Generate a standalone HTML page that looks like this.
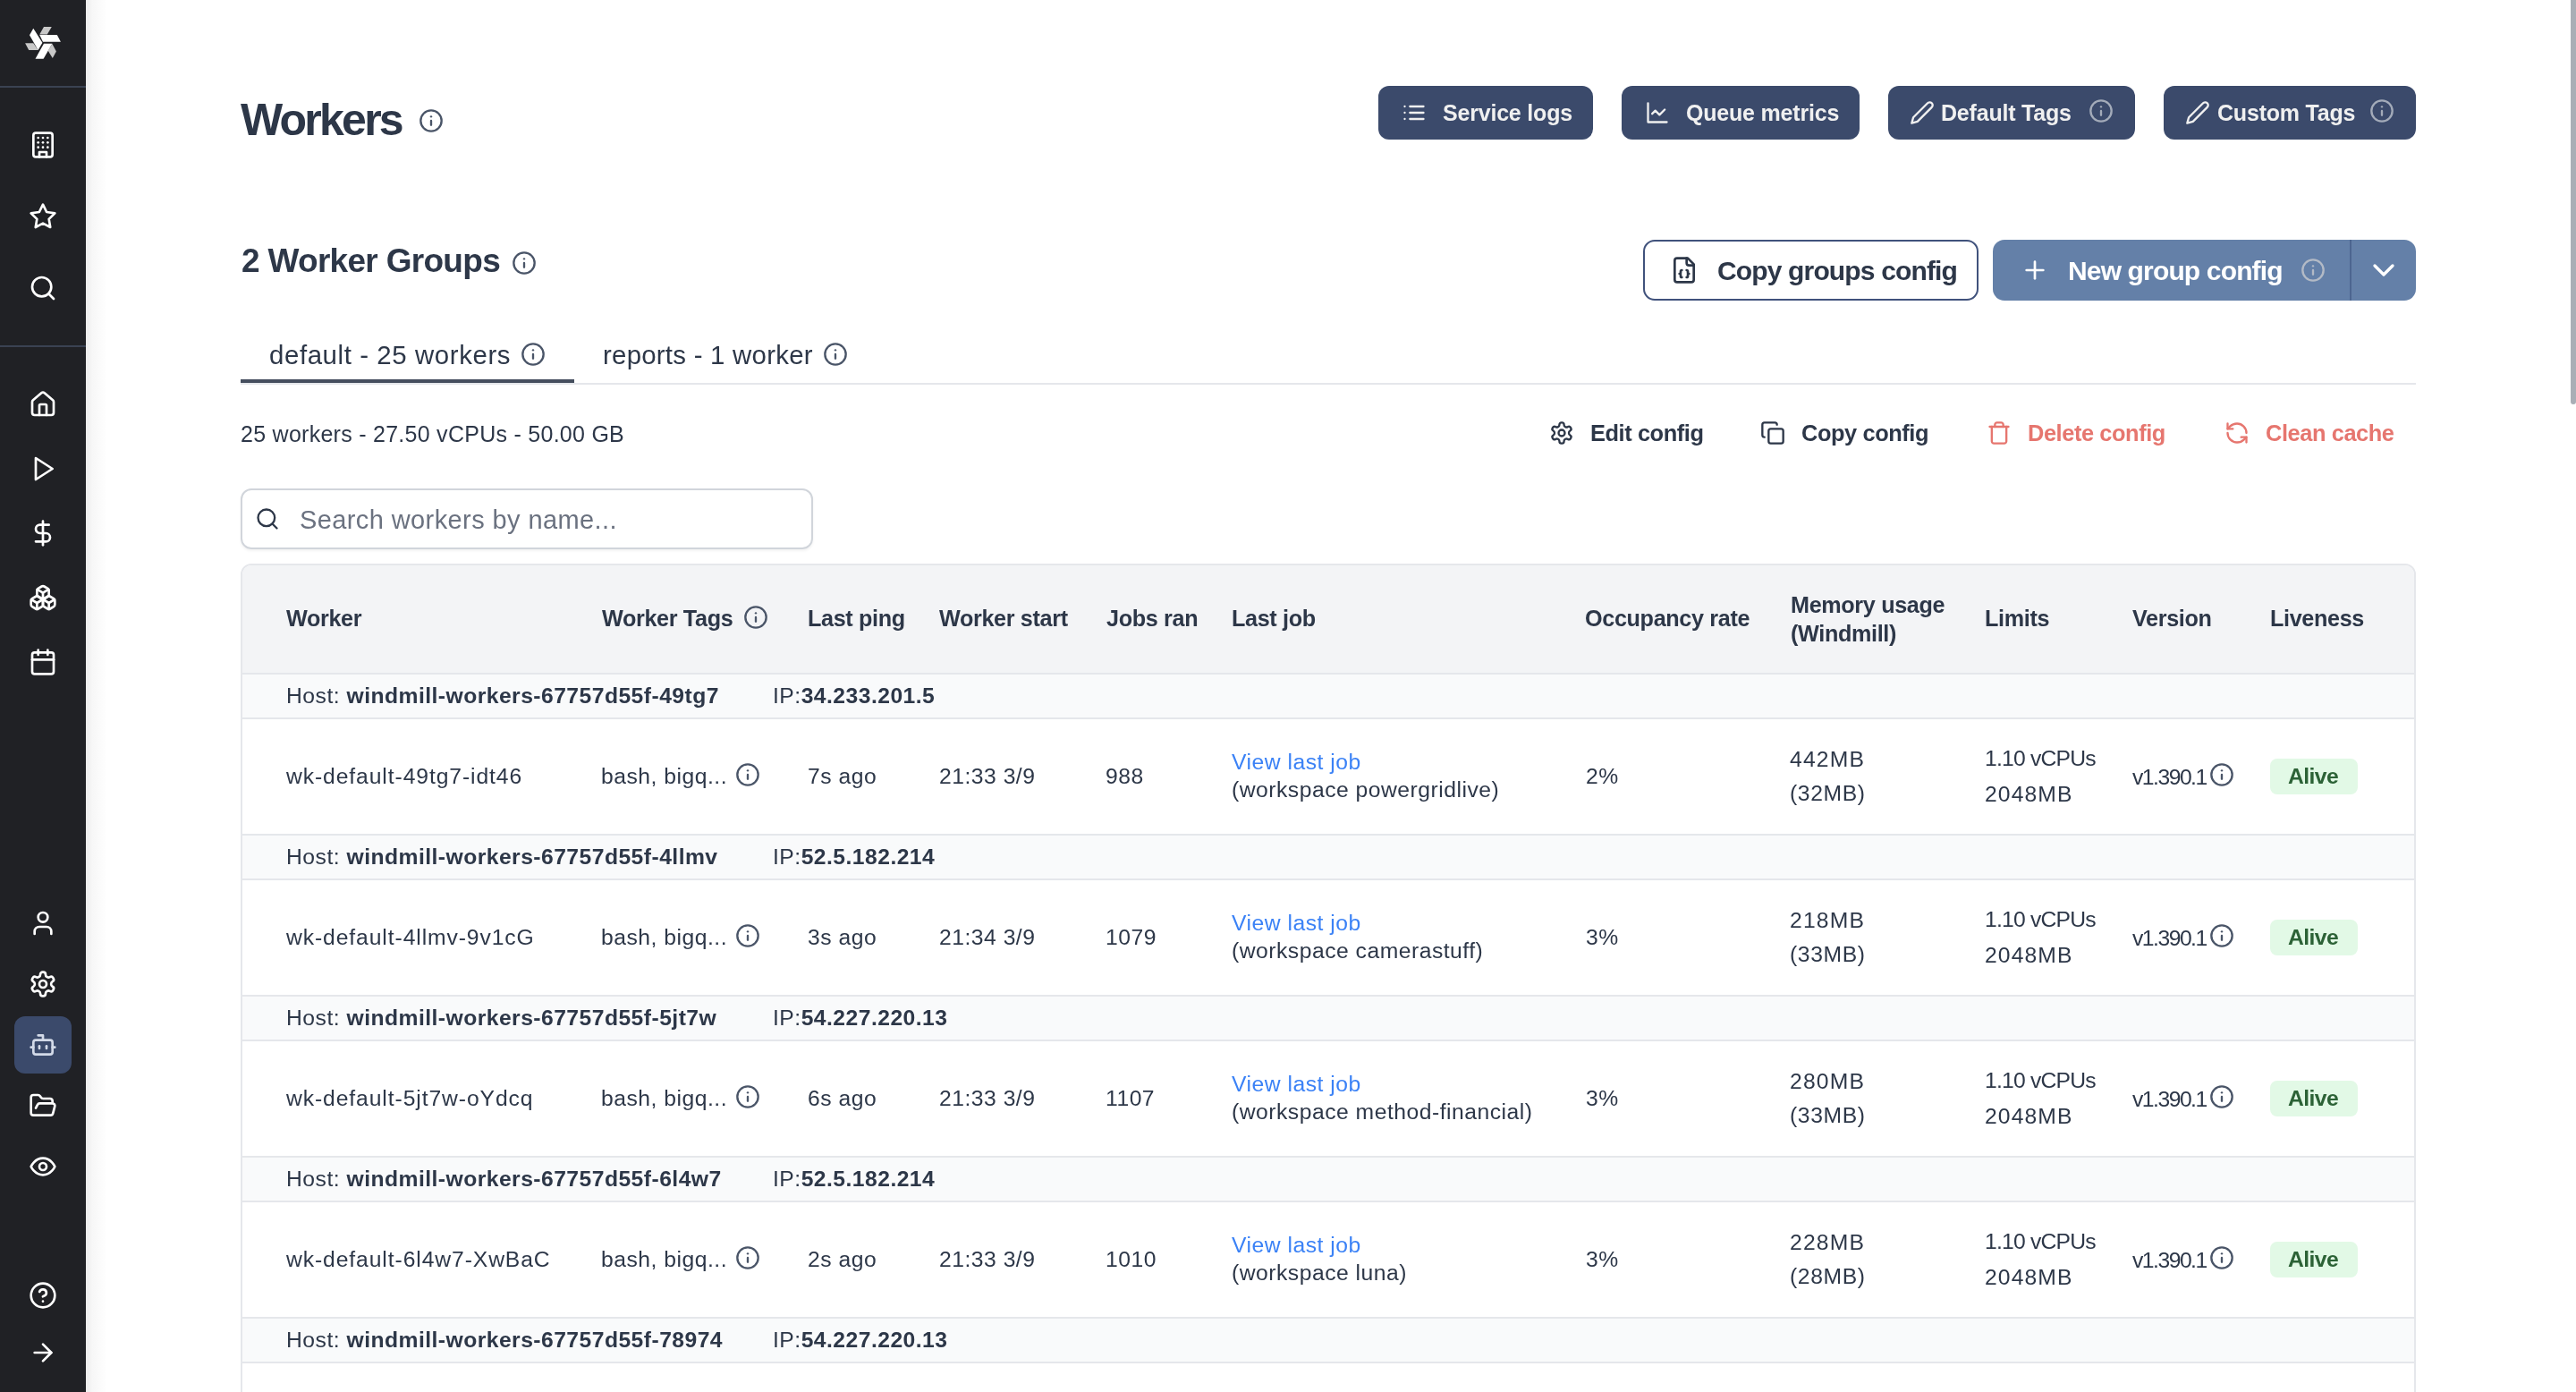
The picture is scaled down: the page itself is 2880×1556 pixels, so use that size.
<!DOCTYPE html>
<html><head><meta charset="utf-8"><title>Workers</title>
<style>
*{margin:0;padding:0;box-sizing:border-box}
html,body{width:2880px;height:1556px;overflow:hidden;background:#fff}
@media (max-width:1600px){html{zoom:0.5}}
body{position:relative;font-family:"Liberation Sans", sans-serif;color:#2d3748}
.t{position:absolute;white-space:nowrap;line-height:40px;height:40px;will-change:transform}
.b{font-weight:700}
.ic{position:absolute;overflow:visible}
#sb{position:absolute;left:0;top:0;width:96px;height:1556px;background:#202125;z-index:2}
#sb .div{position:absolute;left:0;width:96px;height:2px;background:#3a4252}
#act{position:absolute;left:16px;top:1136px;width:64px;height:64px;border-radius:12px;background:#3b4a6b}
#sbshadow{position:absolute;left:96px;top:0;width:24px;height:1556px;background:linear-gradient(to right,#ececec,#f7f7f7 30%,#fff);z-index:1}
.title{font-size:50px;letter-spacing:-2.75px}
.btn{position:absolute;top:96px;height:60px;border-radius:12px;background:#3b4a6b}
.btxt{font-size:25px;color:#f0f0f0;letter-spacing:-0.2px}
.h2{font-size:37px;letter-spacing:-0.7px}
#cgc{position:absolute;left:1837px;top:268px;width:375px;height:68px;border:2px solid #40527c;border-radius:13px;background:#fff}
#ngc{position:absolute;left:2228px;top:268px;width:473px;height:68px;border-radius:13px;background:#6480a8}
#ngcdiv{position:absolute;left:2627px;top:268px;width:2px;height:68px;background:#4d6590}
.btxt2{font-size:30px;letter-spacing:-0.85px}
.w{color:#fff}
#tabline{position:absolute;left:269px;top:428px;width:2432px;height:2px;background:#e5e7eb}
#tabact{position:absolute;left:269px;top:424px;width:373px;height:4px;background:#454e5e}
.tab{font-size:29.4px;letter-spacing:0.6px}
.stat{font-size:25px;letter-spacing:0.27px}
.act{font-size:25.4px;letter-spacing:-0.42px}
.red{color:#e6766f}
#search{position:absolute;left:269px;top:546px;width:640px;height:68px;border:2px solid #d1d5db;border-radius:12px;box-shadow:0 2px 3px rgba(0,0,0,0.05)}
.ph{font-size:29px;color:#6b7280;letter-spacing:0.4px}
#table{position:absolute;left:269px;top:630px;width:2432px;height:1000px;border:2px solid #e5e7eb;border-radius:12px;overflow:hidden;background:#fff}
#thead{position:absolute;left:0;top:0;right:0;height:122px;background:#f3f4f6;border-bottom:2px solid #e5e7eb}
.th{font-size:25.2px;letter-spacing:-0.35px}
.hrow{position:absolute;left:271px;width:2428px;height:50px;background:#f9fafb;border-bottom:2px solid #e5e7eb}
.wrow{position:absolute;left:271px;width:2428px;height:130px;background:#fff;border-bottom:2px solid #e5e7eb}
.td{font-size:24.7px;letter-spacing:0.5px}
.td b{letter-spacing:0.45px}
.wk{letter-spacing:0.9px}
.link{color:#3b82f6}
.badge{position:absolute;left:2538px;width:98px;height:40px;border-radius:8px;background:#e2f9e6}
.alive{color:#2c6236;letter-spacing:-0.6px}
#scroll{position:absolute;left:2874px;top:-3px;width:6px;height:455px;border-radius:3px;background:#a9aeb6}
</style></head>
<body>
<div id="sb">
<div class="div" style="top:96px"></div><div class="div" style="top:386px"></div>
<svg class="ic" style="left:24px;top:26px;width:48px;height:44px" viewBox="24 26 48 44">
<polygon fill="#c8c8c8" points="49.0,30.1 57.8,30.1 52.8,38.6 44.2,38.6"/>
<polygon fill="#c8c8c8" points="28.1,48.3 37.3,48.3 42.6,55.9 32.2,55.9"/>
<polygon fill="#c8c8c8" points="58.4,49.1 62.9,57.6 58.8,64.9 53.7,56.8"/>
<polygon fill="#fff" points="37.3,31.8 47.4,47.8 42.6,55.9 33.0,39.3"/>
<polygon fill="#fff" points="44.2,39.0 63.8,39.0 67.9,46.7 48.0,46.7"/>
<polygon fill="#fff" points="49.0,48.7 58.4,48.7 48.6,65.7 39.5,65.7"/>
</svg>
<div id="act"></div>
<svg class="ic" style="left:32px;top:145.7px;width:32px;height:32px" viewBox="0 0 24 24" fill="none" stroke="#ffffff" stroke-width="2" stroke-linecap="round" stroke-linejoin="round"><rect width="16" height="20" x="4" y="2" rx="2" ry="2"/><path d="M9 22v-4h6v4"/><path d="M8 6h.01"/><path d="M16 6h.01"/><path d="M12 6h.01"/><path d="M12 10h.01"/><path d="M12 14h.01"/><path d="M16 10h.01"/><path d="M16 14h.01"/><path d="M8 10h.01"/><path d="M8 14h.01"/></svg>
<svg class="ic" style="left:32px;top:225.7px;width:32px;height:32px" viewBox="0 0 24 24" fill="none" stroke="#ffffff" stroke-width="2" stroke-linecap="round" stroke-linejoin="round"><polygon points="12 2 15.09 8.26 22 9.27 17 14.14 18.18 21.02 12 17.77 5.82 21.02 7 14.14 2 9.27 8.91 8.26 12 2"/></svg>
<svg class="ic" style="left:32px;top:305.8px;width:32px;height:32px" viewBox="0 0 24 24" fill="none" stroke="#ffffff" stroke-width="2" stroke-linecap="round" stroke-linejoin="round"><circle cx="11" cy="11" r="8"/><path d="m21 21-4.3-4.3"/></svg>
<svg class="ic" style="left:32px;top:435.7px;width:32px;height:32px" viewBox="0 0 24 24" fill="none" stroke="#ffffff" stroke-width="2" stroke-linecap="round" stroke-linejoin="round"><path d="M15 21v-8a1 1 0 0 0-1-1h-4a1 1 0 0 0-1 1v8"/><path d="M3 10a2 2 0 0 1 .709-1.528l7-5.999a2 2 0 0 1 2.582 0l7 5.999A2 2 0 0 1 21 10v9a2 2 0 0 1-2 2H5a2 2 0 0 1-2-2z"/></svg>
<svg class="ic" style="left:32px;top:508px;width:32px;height:32px" viewBox="0 0 24 24" fill="none" stroke="#ffffff" stroke-width="2" stroke-linecap="round" stroke-linejoin="round"><polygon points="6 3 20 12 6 21 6 3"/></svg>
<svg class="ic" style="left:32px;top:580px;width:32px;height:32px" viewBox="0 0 24 24" fill="none" stroke="#ffffff" stroke-width="2" stroke-linecap="round" stroke-linejoin="round"><line x1="12" x2="12" y1="2" y2="22"/><path d="M17 5H9.5a3.5 3.5 0 0 0 0 7h5a3.5 3.5 0 0 1 0 7H6"/></svg>
<svg class="ic" style="left:32px;top:652px;width:32px;height:32px" viewBox="0 0 24 24" fill="none" stroke="#ffffff" stroke-width="2" stroke-linecap="round" stroke-linejoin="round"><path d="M2.97 12.92A2 2 0 0 0 2 14.63v3.24a2 2 0 0 0 .97 1.71l3 1.8a2 2 0 0 0 2.06 0L12 19v-5.5l-5-3-4.03 2.42Z"/><path d="m7 16.5-4.74-2.85"/><path d="m7 16.5 5-3"/><path d="M7 16.5v5.17"/><path d="M12 13.5V19l3.97 2.38a2 2 0 0 0 2.06 0l3-1.8a2 2 0 0 0 .97-1.71v-3.24a2 2 0 0 0-.97-1.71L17 10.5l-5 3Z"/><path d="m17 16.5-5-3"/><path d="m17 16.5 4.74-2.85"/><path d="M17 16.5v5.17"/><path d="M7.97 4.42A2 2 0 0 0 7 6.13v4.37l5 3 5-3V6.13a2 2 0 0 0-.97-1.71l-3-1.8a2 2 0 0 0-2.060 0l-3 1.8Z"/><path d="M12 8 7.26 5.15"/><path d="m12 8 4.74-2.85"/><path d="M12 13.5V8"/></svg>
<svg class="ic" style="left:32px;top:723.7px;width:32px;height:32px" viewBox="0 0 24 24" fill="none" stroke="#ffffff" stroke-width="2" stroke-linecap="round" stroke-linejoin="round"><rect width="18" height="18" x="3" y="4" rx="2" ry="2"/><line x1="16" x2="16" y1="2" y2="6"/><line x1="8" x2="8" y1="2" y2="6"/><line x1="3" x2="21" y1="10" y2="10"/></svg>
<svg class="ic" style="left:32px;top:1015.7px;width:32px;height:32px" viewBox="0 0 24 24" fill="none" stroke="#ffffff" stroke-width="2" stroke-linecap="round" stroke-linejoin="round"><path d="M19 21v-2a4 4 0 0 0-4-4H9a4 4 0 0 0-4 4v2"/><circle cx="12" cy="7" r="4"/></svg>
<svg class="ic" style="left:32px;top:1083.7px;width:32px;height:32px" viewBox="0 0 24 24" fill="none" stroke="#ffffff" stroke-width="2" stroke-linecap="round" stroke-linejoin="round"><path d="M12.22 2h-.44a2 2 0 0 0-2 2v.18a2 2 0 0 1-1 1.73l-.43.25a2 2 0 0 1-2 0l-.15-.08a2 2 0 0 0-2.73.73l-.22.38a2 2 0 0 0 .73 2.73l.15.1a2 2 0 0 1 1 1.72v.51a2 2 0 0 1-1 1.74l-.15.09a2 2 0 0 0-.73 2.73l.22.38a2 2 0 0 0 2.73.73l.15-.08a2 2 0 0 1 2 0l.43.25a2 2 0 0 1 1 1.73V20a2 2 0 0 0 2 2h.44a2 2 0 0 0 2-2v-.18a2 2 0 0 1 1-1.73l.43-.25a2 2 0 0 1 2 0l.15.08a2 2 0 0 0 2.73-.73l.22-.39a2 2 0 0 0-.73-2.73l-.15-.08a2 2 0 0 1-1-1.74v-.5a2 2 0 0 1 1-1.74l.15-.09a2 2 0 0 0 .73-2.730l-.22-.38a2 2 0 0 0-2.73-.73l-.15.08a2 2 0 0 1-2 0l-.43-.25a2 2 0 0 1-1-1.73V4a2 2 0 0 0-2-2z"/><circle cx="12" cy="12" r="3"/></svg>
<svg class="ic" style="left:32px;top:1152px;width:32px;height:32px" viewBox="0 0 24 24" fill="none" stroke="#d3dae8" stroke-width="2" stroke-linecap="round" stroke-linejoin="round"><path d="M12 8V4H8"/><rect width="16" height="12" x="4" y="8" rx="2"/><path d="M2 14h2"/><path d="M20 14h2"/><path d="M15 13v2"/><path d="M9 13v2"/></svg>
<svg class="ic" style="left:32px;top:1220px;width:32px;height:32px" viewBox="0 0 24 24" fill="none" stroke="#ffffff" stroke-width="2" stroke-linecap="round" stroke-linejoin="round"><path d="m6 14 1.5-2.9A2 2 0 0 1 9.24 10H20a2 2 0 0 1 1.94 2.5l-1.54 6a2 2 0 0 1-1.95 1.5H4a2 2 0 0 1-2-2V5a2 2 0 0 1 2-2h3.9a2 2 0 0 1 1.69.9l.81 1.2a2 2 0 0 0 1.67.9H18a2 2 0 0 1 2 2v2"/></svg>
<svg class="ic" style="left:32px;top:1287.7px;width:32px;height:32px" viewBox="0 0 24 24" fill="none" stroke="#ffffff" stroke-width="2" stroke-linecap="round" stroke-linejoin="round"><path d="M2 12s3-7 10-7 10 7 10 7-3 7-10 7-10-7-10-7Z"/><circle cx="12" cy="12" r="3"/></svg>
<svg class="ic" style="left:32px;top:1431.7px;width:32px;height:32px" viewBox="0 0 24 24" fill="none" stroke="#ffffff" stroke-width="2" stroke-linecap="round" stroke-linejoin="round"><circle cx="12" cy="12" r="10"/><path d="M9.09 9a3 3 0 0 1 5.83 1c0 2-3 3-3 3"/><path d="M12 17h.01"/></svg>
<svg class="ic" style="left:32px;top:1495.6px;width:32px;height:32px" viewBox="0 0 24 24" fill="none" stroke="#ffffff" stroke-width="2" stroke-linecap="round" stroke-linejoin="round"><path d="M5 12h14"/><path d="m12 5 7 7-7 7"/></svg>
</div>
<div id="sbshadow"></div>
<div class="t b title" style="left:269px;top:114.3px">Workers</div>
<svg class="ic" style="left:467.8px;top:120.8px;width:28px;height:28px" viewBox="0 0 24 24" fill="none" stroke="#4a5568" stroke-width="2" stroke-linecap="round" stroke-linejoin="round"><circle cx="12" cy="12" r="10"/><path d="M12 16v-4"/><path d="M12 8h.01"/></svg>
<div class="btn" style="left:1541px;width:240px"></div>
<svg class="ic" style="left:1566.5px;top:111.5px;width:28px;height:28px" viewBox="0 0 24 24" fill="none" stroke="#f0f0f0" stroke-width="2" stroke-linecap="round" stroke-linejoin="round"><line x1="8" x2="21" y1="6" y2="6"/><line x1="8" x2="21" y1="12" y2="12"/><line x1="8" x2="21" y1="18" y2="18"/><line x1="3" x2="3.01" y1="6" y2="6"/><line x1="3" x2="3.01" y1="12" y2="12"/><line x1="3" x2="3.01" y1="18" y2="18"/></svg>
<div class="t b btxt" style="left:1613px;top:105.5px">Service logs</div>
<div class="btn" style="left:1813px;width:266px"></div>
<svg class="ic" style="left:1838.7px;top:111.5px;width:28px;height:28px" viewBox="0 0 24 24" fill="none" stroke="#f0f0f0" stroke-width="2" stroke-linecap="round" stroke-linejoin="round"><path d="M3 3v18h18"/><path d="m19 9-5 5-4-4-3 3"/></svg>
<div class="t b btxt" style="left:1884.5px;top:105.5px">Queue metrics</div>
<div class="btn" style="left:2111px;width:276px"></div>
<svg class="ic" style="left:2134.5px;top:111.5px;width:28px;height:28px" viewBox="0 0 24 24" fill="none" stroke="#f0f0f0" stroke-width="2" stroke-linecap="round" stroke-linejoin="round"><path d="M17 3a2.85 2.83 0 1 1 4 4L7.5 20.5 2 22l1.5-5.5Z"/></svg>
<div class="t b btxt" style="left:2170px;top:105.5px">Default Tags</div>
<svg class="ic" style="left:2334.8px;top:109.8px;width:28px;height:28px" viewBox="0 0 24 24" fill="none" stroke="#a3abb9" stroke-width="2" stroke-linecap="round" stroke-linejoin="round"><circle cx="12" cy="12" r="10"/><path d="M12 16v-4"/><path d="M12 8h.01"/></svg>
<div class="btn" style="left:2419px;width:282px"></div>
<svg class="ic" style="left:2442.5px;top:111.5px;width:28px;height:28px" viewBox="0 0 24 24" fill="none" stroke="#f0f0f0" stroke-width="2" stroke-linecap="round" stroke-linejoin="round"><path d="M17 3a2.85 2.83 0 1 1 4 4L7.5 20.5 2 22l1.5-5.5Z"/></svg>
<div class="t b btxt" style="left:2478.5px;top:105.5px">Custom Tags</div>
<svg class="ic" style="left:2649.3px;top:109.8px;width:28px;height:28px" viewBox="0 0 24 24" fill="none" stroke="#a3abb9" stroke-width="2" stroke-linecap="round" stroke-linejoin="round"><circle cx="12" cy="12" r="10"/><path d="M12 16v-4"/><path d="M12 8h.01"/></svg>
<div class="t b h2" style="left:269.5px;top:271.5px">2 Worker Groups</div>
<svg class="ic" style="left:571.8px;top:279.8px;width:28px;height:28px" viewBox="0 0 24 24" fill="none" stroke="#4a5568" stroke-width="2" stroke-linecap="round" stroke-linejoin="round"><circle cx="12" cy="12" r="10"/><path d="M12 16v-4"/><path d="M12 8h.01"/></svg>
<div id="cgc"></div>
<svg class="ic" style="left:1867px;top:285.7px;width:32px;height:32px" viewBox="0 0 24 24" fill="none" stroke="#2d3748" stroke-width="2" stroke-linecap="round" stroke-linejoin="round"><path d="M15 2H6a2 2 0 0 0-2 2v16a2 2 0 0 0 2 2h12a2 2 0 0 0 2-2V7Z"/><path d="M14 2v4a2 2 0 0 0 2 2h4"/><path d="M10 12a1 1 0 0 0-1 1v1a1 1 0 0 1-1 1 1 1 0 0 1 1 1v1a1 1 0 0 0 1 1"/><path d="M14 18a1 1 0 0 0 1-1v-1a1 1 0 0 1 1-1 1 1 0 0 1-1-1v-1a1 1 0 0 0-1-1"/></svg>
<div class="t b btxt2" style="left:1919.5px;top:283.2px">Copy groups config</div>
<div id="ngc"></div><div id="ngcdiv"></div>
<svg class="ic" style="left:2258.7px;top:285.7px;width:32px;height:32px" viewBox="0 0 24 24" fill="none" stroke="#ffffff" stroke-width="2" stroke-linecap="round" stroke-linejoin="round"><path d="M5 12h14"/><path d="M12 5v14"/></svg>
<div class="t b btxt2 w" style="left:2311.5px;top:283.0px">New group config</div>
<svg class="ic" style="left:2571.8px;top:287.8px;width:28px;height:28px" viewBox="0 0 24 24" fill="none" stroke="#b3bac6" stroke-width="2" stroke-linecap="round" stroke-linejoin="round"><circle cx="12" cy="12" r="10"/><path d="M12 16v-4"/><path d="M12 8h.01"/></svg>
<svg class="ic" style="left:2644.7px;top:282.2px;width:40px;height:40px" viewBox="0 0 24 24" fill="none" stroke="#ffffff" stroke-width="2" stroke-linecap="round" stroke-linejoin="round"><path d="m6 9 6 6 6-6"/></svg>
<div id="tabline"></div><div id="tabact"></div>
<div class="t tab" style="left:301px;top:377.0px">default - 25 workers</div>
<svg class="ic" style="left:581.8px;top:381.8px;width:28px;height:28px" viewBox="0 0 24 24" fill="none" stroke="#4a5568" stroke-width="2" stroke-linecap="round" stroke-linejoin="round"><circle cx="12" cy="12" r="10"/><path d="M12 16v-4"/><path d="M12 8h.01"/></svg>
<div class="t tab" style="left:673.5px;top:377.0px;letter-spacing:0.25px">reports - 1 worker</div>
<svg class="ic" style="left:920.4px;top:381.8px;width:28px;height:28px" viewBox="0 0 24 24" fill="none" stroke="#4a5568" stroke-width="2" stroke-linecap="round" stroke-linejoin="round"><circle cx="12" cy="12" r="10"/><path d="M12 16v-4"/><path d="M12 8h.01"/></svg>
<div class="t stat" style="left:269px;top:464.6px">25 workers - 27.50 vCPUs - 50.00 GB</div>
<svg class="ic" style="left:1731.8px;top:469.8px;width:28px;height:28px" viewBox="0 0 24 24" fill="none" stroke="#2d3748" stroke-width="2" stroke-linecap="round" stroke-linejoin="round"><path d="M12.22 2h-.44a2 2 0 0 0-2 2v.18a2 2 0 0 1-1 1.73l-.43.25a2 2 0 0 1-2 0l-.15-.08a2 2 0 0 0-2.73.73l-.22.38a2 2 0 0 0 .73 2.73l.15.1a2 2 0 0 1 1 1.72v.51a2 2 0 0 1-1 1.74l-.15.09a2 2 0 0 0-.73 2.73l.22.38a2 2 0 0 0 2.73.73l.15-.08a2 2 0 0 1 2 0l.43.25a2 2 0 0 1 1 1.73V20a2 2 0 0 0 2 2h.44a2 2 0 0 0 2-2v-.18a2 2 0 0 1 1-1.73l.43-.25a2 2 0 0 1 2 0l.15.08a2 2 0 0 0 2.73-.73l.22-.39a2 2 0 0 0-.73-2.73l-.15-.08a2 2 0 0 1-1-1.74v-.5a2 2 0 0 1 1-1.74l.15-.09a2 2 0 0 0 .73-2.730l-.22-.38a2 2 0 0 0-2.73-.73l-.15.08a2 2 0 0 1-2 0l-.43-.25a2 2 0 0 1-1-1.73V4a2 2 0 0 0-2-2z"/><circle cx="12" cy="12" r="3"/></svg>
<div class="t b act" style="left:1777.5px;top:464.3px">Edit config</div>
<svg class="ic" style="left:1967.8px;top:469.8px;width:28px;height:28px" viewBox="0 0 24 24" fill="none" stroke="#2d3748" stroke-width="2" stroke-linecap="round" stroke-linejoin="round"><rect width="14" height="14" x="8" y="8" rx="2" ry="2"/><path d="M4 16c-1.1 0-2-.9-2-2V4c0-1.1.9-2 2-2h10c1.1 0 2 .9 2 2"/></svg>
<div class="t b act" style="left:2014px;top:464.3px">Copy config</div>
<svg class="ic" style="left:2221.2px;top:469.8px;width:28px;height:28px" viewBox="0 0 24 24" fill="none" stroke="#e6766f" stroke-width="2" stroke-linecap="round" stroke-linejoin="round"><path d="M3 6h18"/><path d="M19 6v14c0 1-1 2-2 2H7c-1 0-2-1-2-2V6"/><path d="M8 6V4c0-1 1-2 2-2h4c1 0 2 1 2 2v2"/></svg>
<div class="t b act red" style="left:2266.5px;top:464.3px">Delete config</div>
<svg class="ic" style="left:2487px;top:469.8px;width:28px;height:28px" viewBox="0 0 24 24" fill="none" stroke="#e6766f" stroke-width="2" stroke-linecap="round" stroke-linejoin="round"><path d="M21 12a9 9 0 0 0-9-9 9.75 9.75 0 0 0-6.74 2.74L3 8"/><path d="M3 3v5h5"/><path d="M3 12a9 9 0 0 0 9 9 9.75 9.75 0 0 0 6.74-2.74L21 16"/><path d="M16 16h5v5"/></svg>
<div class="t b act red" style="left:2533px;top:464.3px">Clean cache</div>
<div id="search"></div>
<svg class="ic" style="left:284.7px;top:565.7px;width:28px;height:28px" viewBox="0 0 24 24" fill="none" stroke="#2d3748" stroke-width="2" stroke-linecap="round" stroke-linejoin="round"><circle cx="11" cy="11" r="8"/><path d="m21 21-4.3-4.3"/></svg>
<div class="t ph" style="left:335px;top:561.2px">Search workers by name...</div>
<div id="table">
<div id="thead"></div>
</div>
<div class="t b th" style="left:319.5px;top:671.0px">Worker</div>
<div class="t b th" style="left:672.5px;top:671.0px">Worker Tags</div>
<div class="t b th" style="left:903px;top:671.0px">Last ping</div>
<div class="t b th" style="left:1050px;top:671.0px">Worker start</div>
<div class="t b th" style="left:1237px;top:671.0px">Jobs ran</div>
<div class="t b th" style="left:1376.5px;top:671.0px">Last job</div>
<div class="t b th" style="left:1772px;top:671.0px">Occupancy rate</div>
<div class="t b th" style="left:2219px;top:671.0px">Limits</div>
<div class="t b th" style="left:2383.5px;top:671.0px">Version</div>
<div class="t b th" style="left:2537.5px;top:671.0px">Liveness</div>
<div class="t b th" style="left:2001.5px;top:655.7px">Memory usage</div>
<div class="t b th" style="left:2001.5px;top:687.7px">(Windmill)</div>
<svg class="ic" style="left:830.8px;top:675.8px;width:28px;height:28px" viewBox="0 0 24 24" fill="none" stroke="#4a5568" stroke-width="2" stroke-linecap="round" stroke-linejoin="round"><circle cx="12" cy="12" r="10"/><path d="M12 16v-4"/><path d="M12 8h.01"/></svg>
<div class="hrow" style="top:754px"></div>
<div class="t td" style="left:319.5px;top:757.5px">Host: <b>windmill-workers-67757d55f-49tg7</b></div>
<div class="t td" style="left:864px;top:757.5px">IP:<b>34.233.201.5</b></div>
<div class="wrow" style="top:804px"></div>
<div class="t td wk" style="left:319.5px;top:848.3px">wk-default-49tg7-idt46</div>
<div class="t td" style="left:671.5px;top:848.1px">bash, bigq...</div>
<svg class="ic" style="left:821.8px;top:851.8px;width:28px;height:28px" viewBox="0 0 24 24" fill="none" stroke="#4a5568" stroke-width="2" stroke-linecap="round" stroke-linejoin="round"><circle cx="12" cy="12" r="10"/><path d="M12 16v-4"/><path d="M12 8h.01"/></svg>
<div class="t td" style="left:903px;top:848.1px">7s ago</div>
<div class="t td" style="left:1049.5px;top:848.1px">21:33 3/9</div>
<div class="t td" style="left:1236px;top:848.1px">988</div>
<div class="t td link" style="left:1376.5px;top:832.0px">View last job</div>
<div class="t td" style="left:1377px;top:863.0px">(workspace powergridlive)</div>
<div class="t td" style="left:1773px;top:848.1px">2%</div>
<div class="t td" style="left:2001px;top:828.8px;letter-spacing:1.2px">442MB</div>
<div class="t td" style="left:2001px;top:867.0px;letter-spacing:0.6px">(32MB)</div>
<div class="t td" style="left:2218.5px;top:828.0px;letter-spacing:-0.8px">1.10 vCPUs</div>
<div class="t td" style="left:2218.5px;top:867.7px;letter-spacing:1.1px">2048MB</div>
<div class="t td" style="left:2383.5px;top:848.6px;letter-spacing:-1.5px">v1.390.1</div>
<svg class="ic" style="left:2469.8px;top:852.3px;width:28px;height:28px" viewBox="0 0 24 24" fill="none" stroke="#4a5568" stroke-width="2" stroke-linecap="round" stroke-linejoin="round"><circle cx="12" cy="12" r="10"/><path d="M12 16v-4"/><path d="M12 8h.01"/></svg>
<div class="badge" style="top:848px"></div>
<div class="t b td alive" style="left:2558px;top:848.0px">Alive</div>
<div class="hrow" style="top:934px"></div>
<div class="t td" style="left:319.5px;top:937.5px">Host: <b>windmill-workers-67757d55f-4llmv</b></div>
<div class="t td" style="left:864px;top:937.5px">IP:<b>52.5.182.214</b></div>
<div class="wrow" style="top:984px"></div>
<div class="t td wk" style="left:319.5px;top:1028.3px">wk-default-4llmv-9v1cG</div>
<div class="t td" style="left:671.5px;top:1028.1px">bash, bigq...</div>
<svg class="ic" style="left:821.8px;top:1031.8px;width:28px;height:28px" viewBox="0 0 24 24" fill="none" stroke="#4a5568" stroke-width="2" stroke-linecap="round" stroke-linejoin="round"><circle cx="12" cy="12" r="10"/><path d="M12 16v-4"/><path d="M12 8h.01"/></svg>
<div class="t td" style="left:903px;top:1028.1px">3s ago</div>
<div class="t td" style="left:1049.5px;top:1028.1px">21:34 3/9</div>
<div class="t td" style="left:1236px;top:1028.1px">1079</div>
<div class="t td link" style="left:1376.5px;top:1012.0px">View last job</div>
<div class="t td" style="left:1377px;top:1043.0px">(workspace camerastuff)</div>
<div class="t td" style="left:1773px;top:1028.1px">3%</div>
<div class="t td" style="left:2001px;top:1008.8px;letter-spacing:1.2px">218MB</div>
<div class="t td" style="left:2001px;top:1047.0px;letter-spacing:0.6px">(33MB)</div>
<div class="t td" style="left:2218.5px;top:1008.0px;letter-spacing:-0.8px">1.10 vCPUs</div>
<div class="t td" style="left:2218.5px;top:1047.7px;letter-spacing:1.1px">2048MB</div>
<div class="t td" style="left:2383.5px;top:1028.6px;letter-spacing:-1.5px">v1.390.1</div>
<svg class="ic" style="left:2469.8px;top:1032.3px;width:28px;height:28px" viewBox="0 0 24 24" fill="none" stroke="#4a5568" stroke-width="2" stroke-linecap="round" stroke-linejoin="round"><circle cx="12" cy="12" r="10"/><path d="M12 16v-4"/><path d="M12 8h.01"/></svg>
<div class="badge" style="top:1028px"></div>
<div class="t b td alive" style="left:2558px;top:1028.0px">Alive</div>
<div class="hrow" style="top:1114px"></div>
<div class="t td" style="left:319.5px;top:1117.5px">Host: <b>windmill-workers-67757d55f-5jt7w</b></div>
<div class="t td" style="left:864px;top:1117.5px">IP:<b>54.227.220.13</b></div>
<div class="wrow" style="top:1164px"></div>
<div class="t td wk" style="left:319.5px;top:1208.3px">wk-default-5jt7w-oYdcq</div>
<div class="t td" style="left:671.5px;top:1208.1px">bash, bigq...</div>
<svg class="ic" style="left:821.8px;top:1211.8px;width:28px;height:28px" viewBox="0 0 24 24" fill="none" stroke="#4a5568" stroke-width="2" stroke-linecap="round" stroke-linejoin="round"><circle cx="12" cy="12" r="10"/><path d="M12 16v-4"/><path d="M12 8h.01"/></svg>
<div class="t td" style="left:903px;top:1208.1px">6s ago</div>
<div class="t td" style="left:1049.5px;top:1208.1px">21:33 3/9</div>
<div class="t td" style="left:1236px;top:1208.1px">1107</div>
<div class="t td link" style="left:1376.5px;top:1192.0px">View last job</div>
<div class="t td" style="left:1377px;top:1223.0px">(workspace method-financial)</div>
<div class="t td" style="left:1773px;top:1208.1px">3%</div>
<div class="t td" style="left:2001px;top:1188.8px;letter-spacing:1.2px">280MB</div>
<div class="t td" style="left:2001px;top:1227.0px;letter-spacing:0.6px">(33MB)</div>
<div class="t td" style="left:2218.5px;top:1188.0px;letter-spacing:-0.8px">1.10 vCPUs</div>
<div class="t td" style="left:2218.5px;top:1227.7px;letter-spacing:1.1px">2048MB</div>
<div class="t td" style="left:2383.5px;top:1208.6px;letter-spacing:-1.5px">v1.390.1</div>
<svg class="ic" style="left:2469.8px;top:1212.3px;width:28px;height:28px" viewBox="0 0 24 24" fill="none" stroke="#4a5568" stroke-width="2" stroke-linecap="round" stroke-linejoin="round"><circle cx="12" cy="12" r="10"/><path d="M12 16v-4"/><path d="M12 8h.01"/></svg>
<div class="badge" style="top:1208px"></div>
<div class="t b td alive" style="left:2558px;top:1208.0px">Alive</div>
<div class="hrow" style="top:1294px"></div>
<div class="t td" style="left:319.5px;top:1297.5px">Host: <b>windmill-workers-67757d55f-6l4w7</b></div>
<div class="t td" style="left:864px;top:1297.5px">IP:<b>52.5.182.214</b></div>
<div class="wrow" style="top:1344px"></div>
<div class="t td wk" style="left:319.5px;top:1388.3px">wk-default-6l4w7-XwBaC</div>
<div class="t td" style="left:671.5px;top:1388.1px">bash, bigq...</div>
<svg class="ic" style="left:821.8px;top:1391.8px;width:28px;height:28px" viewBox="0 0 24 24" fill="none" stroke="#4a5568" stroke-width="2" stroke-linecap="round" stroke-linejoin="round"><circle cx="12" cy="12" r="10"/><path d="M12 16v-4"/><path d="M12 8h.01"/></svg>
<div class="t td" style="left:903px;top:1388.1px">2s ago</div>
<div class="t td" style="left:1049.5px;top:1388.1px">21:33 3/9</div>
<div class="t td" style="left:1236px;top:1388.1px">1010</div>
<div class="t td link" style="left:1376.5px;top:1372.0px">View last job</div>
<div class="t td" style="left:1377px;top:1403.0px">(workspace luna)</div>
<div class="t td" style="left:1773px;top:1388.1px">3%</div>
<div class="t td" style="left:2001px;top:1368.8px;letter-spacing:1.2px">228MB</div>
<div class="t td" style="left:2001px;top:1407.0px;letter-spacing:0.6px">(28MB)</div>
<div class="t td" style="left:2218.5px;top:1368.0px;letter-spacing:-0.8px">1.10 vCPUs</div>
<div class="t td" style="left:2218.5px;top:1407.7px;letter-spacing:1.1px">2048MB</div>
<div class="t td" style="left:2383.5px;top:1388.6px;letter-spacing:-1.5px">v1.390.1</div>
<svg class="ic" style="left:2469.8px;top:1392.3px;width:28px;height:28px" viewBox="0 0 24 24" fill="none" stroke="#4a5568" stroke-width="2" stroke-linecap="round" stroke-linejoin="round"><circle cx="12" cy="12" r="10"/><path d="M12 16v-4"/><path d="M12 8h.01"/></svg>
<div class="badge" style="top:1388px"></div>
<div class="t b td alive" style="left:2558px;top:1388.0px">Alive</div>
<div class="hrow" style="top:1474px"></div>
<div class="t td" style="left:319.5px;top:1477.5px">Host: <b>windmill-workers-67757d55f-78974</b></div>
<div class="t td" style="left:864px;top:1477.5px">IP:<b>54.227.220.13</b></div>
<div class="wrow" style="top:1524px"></div>
<div id="scroll"></div>
</body></html>
